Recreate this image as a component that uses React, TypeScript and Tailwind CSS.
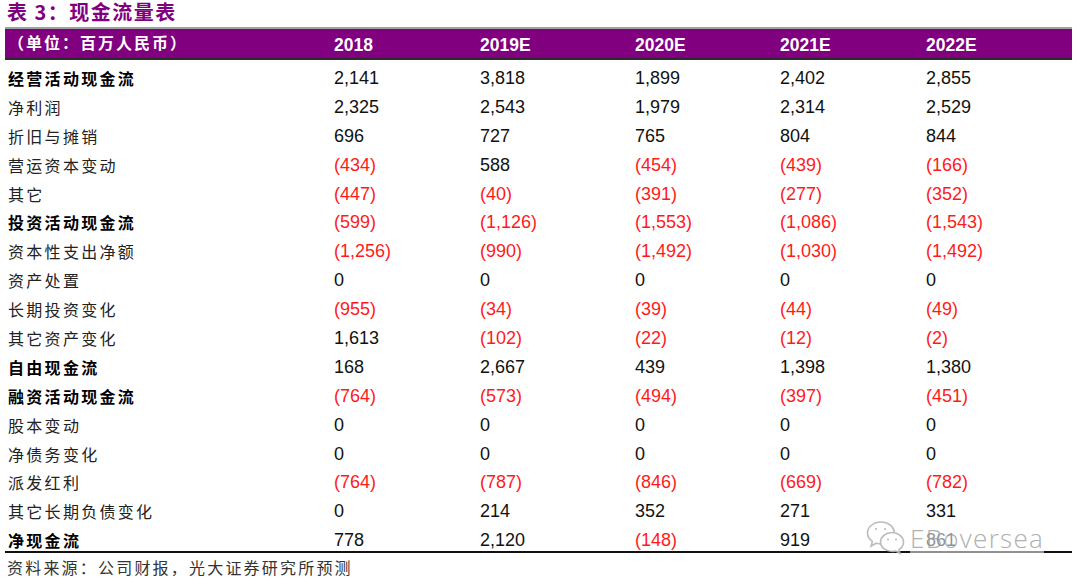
import * as React from "react"

type Row = {
  label: string
  bold?: boolean
  values: string[]
}

const rows: Row[] = [
  { label: "经营活动现金流", bold: true, values: ["2,141", "3,818", "1,899", "2,402", "2,855"] },
  { label: "净利润", values: ["2,325", "2,543", "1,979", "2,314", "2,529"] },
  { label: "折旧与摊销", values: ["696", "727", "765", "804", "844"] },
  { label: "营运资本变动", values: ["(434)", "588", "(454)", "(439)", "(166)"] },
  { label: "其它", values: ["(447)", "(40)", "(391)", "(277)", "(352)"] },
  { label: "投资活动现金流", bold: true, values: ["(599)", "(1,126)", "(1,553)", "(1,086)", "(1,543)"] },
  { label: "资本性支出净额", values: ["(1,256)", "(990)", "(1,492)", "(1,030)", "(1,492)"] },
  { label: "资产处置", values: ["0", "0", "0", "0", "0"] },
  { label: "长期投资变化", values: ["(955)", "(34)", "(39)", "(44)", "(49)"] },
  { label: "其它资产变化", values: ["1,613", "(102)", "(22)", "(12)", "(2)"] },
  { label: "自由现金流", bold: true, values: ["168", "2,667", "439", "1,398", "1,380"] },
  { label: "融资活动现金流", bold: true, values: ["(764)", "(573)", "(494)", "(397)", "(451)"] },
  { label: "股本变动", values: ["0", "0", "0", "0", "0"] },
  { label: "净债务变化", values: ["0", "0", "0", "0", "0"] },
  { label: "派发红利", values: ["(764)", "(787)", "(846)", "(669)", "(782)"] },
  { label: "其它长期负债变化", values: ["0", "214", "352", "271", "331"] },
  { label: "净现金流", bold: true, values: ["778", "2,120", "(148)", "919", "861"] },
]

const years = ["2018", "2019E", "2020E", "2021E", "2022E"]

const cjk = "font-['Noto_Sans_CJK_SC',sans-serif]"
const num = "font-['Liberation_Sans',Arial,sans-serif]"
const cols = "grid grid-cols-[329px_146px_155px_145px_146px_1fr]"

// wechat watermark, two overlapping bubbles
function WeChatMark() {
  return (
    <svg width="40" height="36" viewBox="0 0 40 36" fill="none" stroke="#b5b5b5" strokeWidth="1.6">
      <path d="M15 2C7.5 2 1.5 7 1.5 13c0 3.4 1.9 6.4 4.9 8.4L5 26l5.2-2.8c1.5.4 3.1.6 4.8.6" fill="white" />
      <path d="M15 2c7 0 12.6 4.4 13.4 10" />
      <circle cx="10" cy="9" r="1.1" fill="#b5b5b5" stroke="none" />
      <circle cx="19" cy="9" r="1.1" fill="#b5b5b5" stroke="none" />
      <path d="M26 12.5c-6.4 0-11.5 4.2-11.5 9.5s5.1 9.5 11.5 9.5c1.3 0 2.6-.2 3.8-.5l4.2 2.3-1.1-3.7c2.8-1.7 4.6-4.4 4.6-7.6 0-5.3-5.1-9.5-11.5-9.5z" fill="white" />
      <circle cx="22" cy="19.5" r="1" fill="#b5b5b5" stroke="none" />
      <circle cx="30" cy="19.5" r="1" fill="#b5b5b5" stroke="none" />
    </svg>
  )
}

export default function App() {
  return (
    <div className="relative w-[1080px] h-[583px] bg-white overflow-hidden">
      <div className={`${cjk} h-[27px] flex items-center pl-[7px] pb-[3px] text-[20px] leading-[22px] font-bold text-[#800080] tracking-[1.5px]`}>
        表 3：现金流量表
      </div>

      <div className="ml-[5px] w-[1067px]">
        <div className={`${cols} h-[33px] bg-[#800080] border-t-2 border-[#a0a0a0] border-b-2 border-b-[#2a2a2a] items-end pb-[3px]`}>
          <div className={`${cjk} pl-[3px] text-[16px] leading-[22px] font-bold text-white tracking-[2px] mb-[2px]`}>
            （单位：百万人民币）
          </div>
          {years.map((y) => (
            <div key={y} className={`${num} text-[17.5px] leading-[20px] font-bold text-white`}>
              {y}
            </div>
          ))}
        </div>

        <div className="border-b-2 border-[#111]">
          {rows.map((r) => (
            <div key={r.label} className={`${cols} h-[28.9px] pt-[7px]`}>
              <div
                className={`${cjk} pl-[3px] text-[16px] leading-[22px] tracking-[2.3px] ${
                  r.bold ? "font-bold text-black" : "font-normal text-[#222]"
                }`}
              >
                {r.label}
              </div>
              {r.values.map((v, i) => (
                <div
                  key={i}
                  className={`${num} text-[18px] leading-[22px] ${
                    v.startsWith("(") ? "text-[#ff1a1a]" : "text-[#111]"
                  }`}
                >
                  {v}
                </div>
              ))}
            </div>
          ))}
        </div>
      </div>

      <div className={`${cjk} pl-[7px] pt-[2px] text-[16px] leading-[24px] tracking-[2.2px] text-[#333]`}>
        资料来源：公司财报，光大证券研究所预测
      </div>

      <div className="absolute left-[866px] top-[520px] flex items-center gap-[4px] opacity-90">
        <WeChatMark />
        <span className="font-['Open_Sans',sans-serif] font-light text-[26px] leading-[30px] tracking-[1.3px] text-[#a8a8a8] bg-white/60">
          EBoversea
        </span>
      </div>
    </div>
  )
}
